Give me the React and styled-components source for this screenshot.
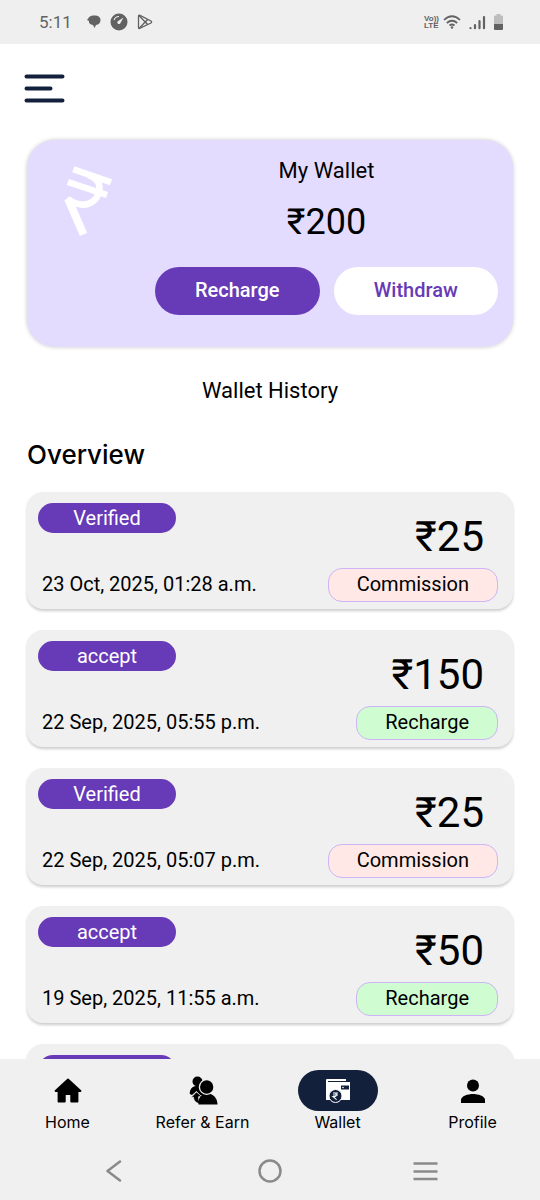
import * as React from 'react';
import styled, { createGlobalStyle } from 'styled-components';

const GlobalStyle = createGlobalStyle`
  * {
    box-sizing: border-box;
  }

  body {
    margin: 0;
    background: #fff;
    color: #000;
    font-family: Roboto, 'Liberation Sans', sans-serif;
  }

  button {
    font-family: inherit;
    cursor: pointer;
  }
`;

const Screen = styled.div`
  display: flex;
  flex-direction: column;
  height: 100vh;
  overflow: hidden;
`;

const StatusBar = styled.header`
  display: flex;
  flex-shrink: 0;
  align-items: center;
  justify-content: space-between;
  height: 44px;
  padding: 0 36px 0 39px;
  background: #efefef;
  color: #626262;
`;

const StatusGroup = styled.div`
  display: flex;
  align-items: center;
  gap: ${({ $gap }) => $gap}px;
`;

const Time = styled.span`
  margin-right: 6px;
  font-size: 17px;
`;

const Volte = styled.span`
  display: grid;
  font-family: 'Liberation Sans', sans-serif;
  font-size: 8px;
  font-weight: 700;
  line-height: 7px;
`;

const Content = styled.main`
  flex: 1;
  min-height: 0;
  padding: 0 27px;
  overflow-y: auto;
  scrollbar-width: none;
`;

const MenuButton = styled.button`
  display: block;
  margin: 28px 0 0 -3px;
  padding: 0;
  border: 0;
  background: none;
  color: #12203c;
`;

const Icon = styled.svg`
  display: block;
  flex-shrink: 0;
`;

const WalletCard = styled.section`
  display: grid;
  grid-template-columns: 112px 1fr;
  margin-top: 36px;
  padding: 16px 15px 32px 16px;
  border-radius: 28px;
  background: #e4dcfe;
  box-shadow: 0 0 4px rgba(0, 0, 0, 0.22);
`;

const RupeeArt = styled(Icon)`
  margin: 6px 0 0 16px;
`;

const WalletBody = styled.div`
  text-align: center;
`;

const WalletTitle = styled.h1`
  margin: 0;
  font-size: 22px;
  font-weight: 400;
  line-height: 30px;
`;

const Balance = styled.p`
  margin: 12px 0 21px;
  font-size: 36px;
  line-height: 48px;
`;

const WalletActions = styled.div`
  display: grid;
  grid-template-columns: 1fr 1fr;
  gap: 14px;
`;

const ActionButton = styled.button`
  height: 48px;
  padding: 0 0 2px;
  border: 0;
  border-radius: 24px;
  background: ${({ $primary }) => ($primary ? '#673ab7' : '#fff')};
  color: ${({ $primary }) => ($primary ? '#fff' : '#673ab7')};
  font-size: 20px;
  font-weight: 500;
`;

const HistoryTitle = styled.h2`
  margin: 29px 0 0;
  font-size: 22px;
  font-weight: 400;
  line-height: 30px;
  text-align: center;
`;

const OverviewTitle = styled.h3`
  margin: 30px 0 18px;
  font-family: Inter, 'Liberation Sans', sans-serif;
  font-size: 26px;
  font-weight: 500;
  line-height: 38px;
`;

const History = styled.ul`
  display: grid;
  gap: 21px;
  margin: 0;
  padding: 0 0 21px;
  list-style: none;
`;

const Entry = styled.li`
  display: grid;
  grid-template-columns: 1fr auto;
  grid-template-rows: 65px 34px;
  height: 117px;
  padding: 11px 15px 7px 11px;
  border-radius: 16px;
  background: #f0f0f0;
  box-shadow: 0 2px 3px rgba(0, 0, 0, 0.2);
`;

const Status = styled.span`
  width: 138px;
  height: 30px;
  border-radius: 15px;
  background: #673ab7;
  color: #fff;
  font-size: 20px;
  line-height: 30px;
  text-align: center;
`;

const Amount = styled.strong`
  justify-self: end;
  margin: 4px 14px 0 0;
  font-size: 42px;
  font-weight: 400;
  line-height: 60px;
`;

const EntryDate = styled.time`
  margin-left: 4px;
  font-size: 20px;
  line-height: 32px;
`;

const Tag = styled.span`
  justify-self: end;
  height: 34px;
  padding: 0 28px;
  border: 1px solid #cdb4f6;
  border-radius: 14px;
  background: ${({ $kind }) => ($kind === 'Commission' ? '#ffe8e5' : '#d0fcd2')};
  font-size: 20px;
  line-height: 30px;
`;

const TabBar = styled.nav`
  display: grid;
  flex-shrink: 0;
  grid-template-columns: repeat(4, 1fr);
  padding: 11px 0 9px;
  background: #f0f0f0;
`;

const Tab = styled.a`
  display: grid;
  justify-items: center;
  color: #000;
  font-family: Inter, 'Liberation Sans', sans-serif;
  font-size: 16px;
  line-height: 22px;
  text-decoration: none;
`;

const TabIcon = styled.span`
  display: grid;
  place-items: center;
  width: 80px;
  height: 41px;
  border-radius: 21px;
  background: ${({ $active }) => ($active ? '#12203c' : 'transparent')};
`;

const SystemBar = styled.footer`
  display: grid;
  flex-shrink: 0;
  grid-template-columns: repeat(3, 1fr);
  height: 58px;
  padding: 0 36px;
  background: #f0f0f0;
`;

const SystemButton = styled.button`
  display: grid;
  place-items: center;
  padding: 0;
  border: 0;
  background: none;
  color: #8a8a8a;
`;

const entries = [
  { status: 'Verified', amount: '₹25', date: '23 Oct, 2025, 01:28 a.m.', kind: 'Commission' },
  { status: 'accept', amount: '₹150', date: '22 Sep, 2025, 05:55 p.m.', kind: 'Recharge' },
  { status: 'Verified', amount: '₹25', date: '22 Sep, 2025, 05:07 p.m.', kind: 'Commission' },
  { status: 'accept', amount: '₹50', date: '19 Sep, 2025, 11:55 a.m.', kind: 'Recharge' },
];

function HomeIcon() {
  return (
    <Icon width="28" height="26" viewBox="0 0 28 26">
      <path
        d="M14 1.500 1.500 13h3v10.500h6.300V16h6.400v7.500h6.300V13h3z"
        stroke="currentColor"
        strokeWidth="1.800"
        strokeLinejoin="round"
      />
    </Icon>
  );
}

function ReferIcon() {
  return (
    <Icon width="30" height="30" viewBox="0 0 30 30">
      <circle cx="9.500" cy="5.500" r="5" />
      <path d="M1.800 18C1.500 14 4 10 8 10h8v9h-4l-3.500-4-4.500 4z" />
      <path d="M3 21.500 8.500 16l4.500 4-2.500.8c0 2.700.5 4.700 2.500 7.200-5-.5-7.500-4-7.500-7z" stroke="#f0f0f0" strokeWidth=".6" />
      <path d="M10.500 28.500C10 22 13 17.500 19 17.500S29.500 22 29.500 28.500z" />
      <circle cx="18.700" cy="11" r="7.300" stroke="#f0f0f0" strokeWidth="1.300" />
    </Icon>
  );
}

function WalletIcon() {
  return (
    <Icon width="26" height="26" viewBox="0 0 26 26">
      <path d="M2 1h19v3h4v18H1V2q0-1 1-1z" fill="#fff" />
      <path d="M3 3.500h19" stroke="#12203c" />
      <path d="M16 7.500h8v4h-8z" fill="#12203c" />
      <circle cx="18" cy="9.500" r=".8" fill="#fff" />
      <circle cx="10.500" cy="18" r="6.500" fill="#12203c" stroke="#fff" />
      <path
        d="M8 15h5M8 17h5M8 15h1.500c2.600 0 2.600 3.600 0 3.600H8l3.600 3"
        fill="none"
        stroke="#fff"
        strokeWidth="1.100"
      />
    </Icon>
  );
}

function ProfileIcon() {
  return (
    <Icon width="24" height="24" viewBox="0 0 24 24">
      <circle cx="12" cy="6.500" r="6" />
      <path d="M0 24v-3c0-4 7-6 12-6s12 2 12 6v3z" />
    </Icon>
  );
}

const tabs = [
  { label: 'Home', icon: HomeIcon },
  { label: 'Refer & Earn', icon: ReferIcon },
  { label: 'Wallet', icon: WalletIcon, active: true },
  { label: 'Profile', icon: ProfileIcon },
];

function PhoneStatus() {
  return (
    <StatusBar>
      <StatusGroup $gap={9}>
        <Time>5:11</Time>
        <Icon width="14" height="14" viewBox="0 0 14 14" fill="currentColor">
          <path d="M1.500 3C2.500 1 5 .5 7.500.5c4 0 6 2 6 4.800 0 2.700-1.800 4.400-4.500 4.700L7.500 13 6 10C3 9.500 1.500 8 2 6L0 5z" />
        </Icon>
        <Icon width="18" height="18" viewBox="0 0 18 18">
          <circle cx="9" cy="9" r="8.500" fill="currentColor" />
          <path d="M4 7a5.500 5.500 0 0 1 5-3.500" fill="none" stroke="#efefef" strokeWidth="1.100" />
          <path d="m13.500 4.500-3.300 6a1.700 1.700 0 0 1-2.700-2z" fill="#efefef" />
        </Icon>
        <Icon
          width="16"
          height="16"
          viewBox="0 0 16 16"
          fill="none"
          stroke="currentColor"
          strokeWidth="1.300"
          strokeLinejoin="round"
        >
          <path d="M1.500 2.500v11q0 1.500 1.500.7L14 9q1.200-1 0-2L3 1.300q-1.500-.6-1.500 1.200z" />
          <path d="m2 1.500 8.500 9M2 14.500l8.500-9M10.500 5.500 8.500 8l2 2.500" />
        </Icon>
      </StatusGroup>
      <StatusGroup $gap={7}>
        <StatusGroup $gap={4}>
          <Volte>
            <span>Vo))</span>
            <span>LTE</span>
          </Volte>
          <Icon
            width="18"
            height="14"
            viewBox="0 0 18 14"
            fill="none"
            stroke="currentColor"
            strokeWidth="1.700"
          >
            <path d="M1 5q8-7.500 16 0M3.800 8q5.200-4.500 10.400 0M6.500 10.500q2.500-2 5 0" />
            <circle cx="9" cy="12.500" r="1.200" fill="currentColor" stroke="none" />
          </Icon>
        </StatusGroup>
        <Icon
          width="18"
          height="15"
          viewBox="0 0 18 15"
          stroke="currentColor"
          strokeWidth="2.200"
          strokeLinecap="round"
        >
          <path d="M2.500 13v.2M7 10v3.200M11.500 6v7.200M16 2v11.200" />
        </Icon>
        <Icon width="11" height="18" viewBox="0 0 11 18">
          <path d="M3.500 1h4v1.500H9q1 0 1 1V11H1V3.500q0-1 1-1h1.500z" fill="#bdbdbd" />
          <path d="M1 11h9v5q0 1-1 1H2q-1 0-1-1z" fill="currentColor" />
        </Icon>
      </StatusGroup>
    </StatusBar>
  );
}

export default function App() {
  return (
    <Screen>
      <GlobalStyle />
      <PhoneStatus />

      <Content>
        <MenuButton aria-label="Menu">
          <Icon
            width="42"
            height="32"
            viewBox="0 0 42 32"
            stroke="currentColor"
            strokeWidth="4"
            strokeLinecap="round"
          >
            <path d="M2.500 4.500h36M2.500 16.500h24M2.500 28.500h36" />
          </Icon>
        </MenuButton>

        <WalletCard>
          <RupeeArt
            width="60"
            height="80"
            viewBox="0 0 60 80"
            fill="none"
            stroke="#fff"
            strokeWidth="6.500"
          >
            <path d="M14.300 7.300 52 20.200M8.800 20 48 33" />
            <path d="M29 13c9 3 13 9 11 17S31 43.500 22 42.500C17 42 12 39.500 8 37" />
            <path d="M9 36.500 24.500 72.500" strokeWidth="8" />
          </RupeeArt>
          <WalletBody>
            <WalletTitle>My Wallet</WalletTitle>
            <Balance>₹200</Balance>
            <WalletActions>
              <ActionButton $primary>Recharge</ActionButton>
              <ActionButton>Withdraw</ActionButton>
            </WalletActions>
          </WalletBody>
        </WalletCard>

        <HistoryTitle>Wallet History</HistoryTitle>
        <OverviewTitle>Overview</OverviewTitle>

        <History>
          {entries.map(entry => (
            <Entry key={entry.date}>
              <Status>{entry.status}</Status>
              <Amount>{entry.amount}</Amount>
              <EntryDate>{entry.date}</EntryDate>
              <Tag $kind={entry.kind}>{entry.kind}</Tag>
            </Entry>
          ))}
          <Entry aria-busy="true">
            <Status />
          </Entry>
        </History>
      </Content>

      <TabBar>
        {tabs.map(({ label, icon: TabGlyph, active }) => (
          <Tab key={label} href="#" aria-current={active ? 'page' : undefined}>
            <TabIcon $active={active}>
              <TabGlyph />
            </TabIcon>
            {label}
          </Tab>
        ))}
      </TabBar>

      <SystemBar>
        <SystemButton aria-label="Back">
          <Icon width="16" height="24" viewBox="0 0 16 24" fill="none" stroke="currentColor" strokeWidth="2.500">
            <path d="M14 2.500 1.500 12 14 21.500" strokeLinecap="round" strokeLinejoin="round" />
          </Icon>
        </SystemButton>
        <SystemButton aria-label="Home screen">
          <Icon width="24" height="24" viewBox="0 0 24 24" fill="none" stroke="currentColor" strokeWidth="2.500">
            <circle cx="12" cy="12" r="10.500" />
          </Icon>
        </SystemButton>
        <SystemButton aria-label="Recent apps">
          <Icon width="26" height="22" viewBox="0 0 26 22" stroke="currentColor" strokeWidth="2.500">
            <path d="M.5 3.500h24M.5 11.500h24M.5 19h24" />
          </Icon>
        </SystemButton>
      </SystemBar>
    </Screen>
  );
}
